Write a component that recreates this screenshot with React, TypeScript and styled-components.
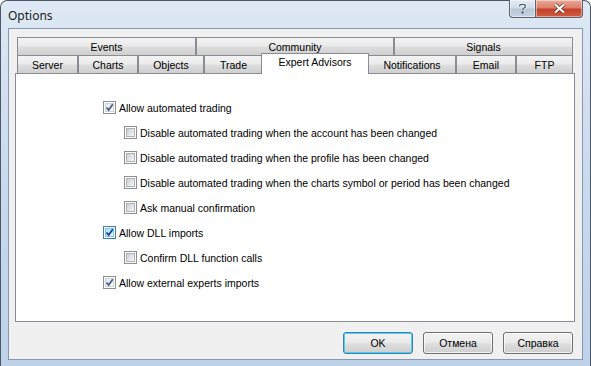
import styled, { createGlobalStyle } from 'styled-components';

const GlobalStyle = createGlobalStyle`
  html, body {
    margin: 0;
    padding: 0;
    overflow: hidden;
    background: #fff;
  }
  body {
    font-family: 'Liberation Sans', Arial, sans-serif;
  }
`;

const Window = styled.div`
  width: 591px;
  height: 366px;
  box-sizing: border-box;
  border: 1px solid #4b5868;
  border-bottom: none;
  border-radius: 7px 7px 0 0;
  padding: 0 7px 6px 7px;
  background: linear-gradient(180deg, #dfe9f5 0%, #d0def0 30%, #c4d6eb 70%, #bed2e9 100%);
  display: flex;
  flex-direction: column;
`;

const TitleBar = styled.div`
  height: 27px;
  display: flex;
  align-items: flex-start;
  justify-content: space-between;
`;

const Title = styled.div`
  font-family: 'Noto Sans', 'Open Sans', sans-serif;
  font-size: 12px;
  color: #1b1b1b;
  margin: 6px 0 0 0;
`;

const Caption = styled.div`
  display: flex;
  margin-top: -1px;
`;

const CaptionButton = styled.div<{ $close?: boolean }>`
  width: ${(p) => (p.$close ? '47px' : '27px')};
  height: 18px;
  box-sizing: border-box;
  border: 1px solid #5b636d;
  border-top: none;
  border-left: ${(p) => (p.$close ? 'none' : '1px solid #5b636d')};
  border-radius: ${(p) => (p.$close ? '0 0 4px 0' : '0 0 0 4px')};
  background: ${(p) =>
    p.$close
      ? 'linear-gradient(180deg, #e9a99a 0%, #dd7f6b 45%, #c4412b 55%, #d35c40 100%)'
      : 'linear-gradient(180deg, #e4ebf3 0%, #d2dce8 45%, #b9c7d8 55%, #c6d3e2 100%)'};
  display: flex;
  align-items: center;
  justify-content: center;
  box-shadow: inset 0 0 0 1px rgba(255, 255, 255, 0.45);
`;

const Client = styled.div`
  flex: 1;
  border: 1px solid #8699b0;
  background: #f0f0f0;
  padding: 8px 7px 0 6px;
  display: flex;
  flex-direction: column;
`;

const TabStrip = styled.div`
  margin: 0 2px;
  display: flex;
  flex-direction: column;
`;

const TabRow = styled.div`
  display: flex;
  height: 18px;
  align-items: flex-end;
`;

const Tab = styled.div<{ $w: number; $active?: boolean }>`
  width: ${(p) => (p.$active ? p.$w + 3 : p.$w)}px;
  height: ${(p) => (p.$active ? 21 : 18)}px;
  box-sizing: border-box;
  flex: none;
  border: 1px solid #898c95;
  border-bottom: none;
  background: ${(p) =>
    p.$active ? '#fff' : 'linear-gradient(180deg, #f3f3f3 0%, #ebebeb 45%, #dddddd 55%, #cfcfcf 100%)'};
  margin: ${(p) => (p.$active ? '-2px -1px -1px -2px' : '0')};
  position: relative;
  z-index: ${(p) => (p.$active ? 1 : 0)};
  font-size: 10.5px;
  color: #000;
  display: flex;
  justify-content: center;
  padding-top: ${(p) => (p.$active ? 2 : 3)}px;
`;

const Panel = styled.div`
  height: 249px;
  box-sizing: border-box;
  border: 1px solid #898c95;
  background: #fff;
  padding: 21px 0 0 87px;
`;

const Option = styled.div<{ $indent?: boolean }>`
  height: 25px;
  display: flex;
  align-items: center;
  padding-left: ${(p) => (p.$indent ? 21 : 0)}px;
  font-size: 10.5px;
  color: #000;
  gap: 3px;
`;

const Box = styled.span<{ $hot?: boolean }>`
  position: relative;
  width: 13px;
  height: 13px;
  box-sizing: border-box;
  flex: none;
  border: 1px solid ${(p) => (p.$hot ? '#3c7fb1' : '#8e8f8f')};
  background: #fff;
  padding: 1px;
  display: flex;
`;

const BoxFill = styled.span<{ $checked?: boolean; $hot?: boolean }>`
  flex: 1;
  border: 1px solid ${(p) => (p.$hot ? '#79c6f9' : p.$checked ? '#d0d4da' : '#aeb2b7')};
  background: ${(p) =>
    p.$hot
      ? 'linear-gradient(135deg, #b1dffd 0%, #e9f7fe 100%)'
      : p.$checked
        ? 'linear-gradient(135deg, #e6e8eb 0%, #fbfbfb 100%)'
        : 'linear-gradient(135deg, #cbcfd5 0%, #f6f6f6 100%)'};
`;

const Mark = styled.svg`
  position: absolute;
  left: 1px;
  top: 1px;
`;

const ButtonRow = styled.div`
  margin-top: 10px;
  padding-right: 2px;
  display: flex;
  justify-content: flex-end;
  gap: 10px;
`;

const Button = styled.div<{ $default?: boolean }>`
  width: 70px;
  height: 22px;
  box-sizing: border-box;
  border: 1px solid ${(p) => (p.$default ? '#3c7fb1' : '#707070')};
  border-radius: 3px;
  background: linear-gradient(180deg, #f2f2f2 0%, #ebebeb 45%, #dddddd 55%, #cfcfcf 100%);
  box-shadow: inset 0 0 0 1px ${(p) => (p.$default ? '#48d1f5' : 'rgba(255,255,255,0.7)')};
  font-size: 10.5px;
  color: #000;
  display: flex;
  align-items: center;
  justify-content: center;
`;

const backTabs = [
  { label: 'Events', w: 179 },
  { label: 'Community', w: 198 },
  { label: 'Signals', w: 179 },
];

const frontTabs = [
  { label: 'Server', w: 61 },
  { label: 'Charts', w: 60 },
  { label: 'Objects', w: 66 },
  { label: 'Trade', w: 59 },
  { label: 'Expert Advisors', w: 105, active: true },
  { label: 'Notifications', w: 88 },
  { label: 'Email', w: 60 },
  { label: 'FTP', w: 57 },
];

const options = [
  { label: 'Allow automated trading', checked: true },
  { label: 'Disable automated trading when the account has been changed', indent: true },
  { label: 'Disable automated trading when the profile has been changed', indent: true },
  { label: 'Disable automated trading when the charts symbol or period has been changed', indent: true },
  { label: 'Ask manual confirmation', indent: true },
  { label: 'Allow DLL imports', checked: true, hot: true },
  { label: 'Confirm DLL function calls', indent: true },
  { label: 'Allow external experts imports', checked: true },
];

function CheckBox({ checked, hot }: { checked?: boolean; hot?: boolean }) {
  return (
    <Box $hot={hot}>
      <BoxFill $checked={checked} $hot={hot} />
      {checked && (
        <Mark width="9" height="9" viewBox="0 0 9 9">
          <path
            d="M1.5 4.5 L3.6 7 L7.8 1.2"
            fill="none"
            stroke={hot ? '#1c3f94' : '#4c5f8c'}
            strokeWidth="1.8"
          />
        </Mark>
      )}
    </Box>
  );
}

function App() {
  return (
    <>
      <GlobalStyle />
      <Window>
        <TitleBar>
          <Title>Options</Title>
          <Caption>
            <CaptionButton>
              <svg width="9" height="11" viewBox="0 0 9 11">
                <path
                  d="M1.5 3.2 C1.5 0.8 7.5 0.8 7.5 3.2 C7.5 5 4.5 5 4.5 7.2"
                  fill="none"
                  stroke="#fff"
                  strokeWidth="2.6"
                />
                <path
                  d="M1.5 3.2 C1.5 0.8 7.5 0.8 7.5 3.2 C7.5 5 4.5 5 4.5 7.2"
                  fill="none"
                  stroke="#4a5564"
                  strokeWidth="1.2"
                />
                <rect x="3.5" y="8.5" width="2" height="2" fill="#4a5564" />
              </svg>
            </CaptionButton>
            <CaptionButton $close>
              <svg width="13" height="11" viewBox="0 0 13 11">
                <path d="M2 1.5 L11 9.5 M11 1.5 L2 9.5" stroke="#6b2a20" strokeWidth="3.6" />
                <path d="M2 1.5 L11 9.5 M11 1.5 L2 9.5" stroke="#fff" strokeWidth="2.2" />
              </svg>
            </CaptionButton>
          </Caption>
        </TitleBar>
        <Client>
          <TabStrip>
            <TabRow>
              {backTabs.map((t) => (
                <Tab key={t.label} $w={t.w}>
                  {t.label}
                </Tab>
              ))}
            </TabRow>
            <TabRow>
              {frontTabs.map((t) => (
                <Tab key={t.label} $w={t.w} $active={t.active}>
                  {t.label}
                </Tab>
              ))}
            </TabRow>
          </TabStrip>
          <Panel>
            {options.map((o) => (
              <Option key={o.label} $indent={o.indent}>
                <CheckBox checked={o.checked} hot={o.hot} />
                {o.label}
              </Option>
            ))}
          </Panel>
          <ButtonRow>
            <Button $default>OK</Button>
            <Button>Отмена</Button>
            <Button>Справка</Button>
          </ButtonRow>
        </Client>
      </Window>
    </>
  );
}

export default App;
